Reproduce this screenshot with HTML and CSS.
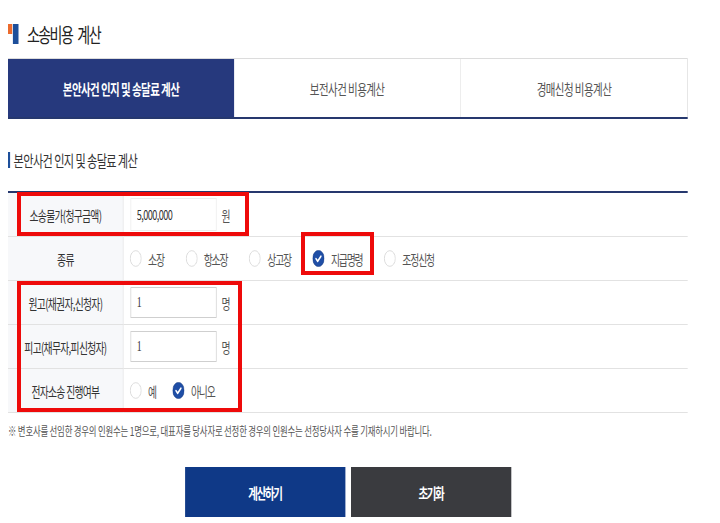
FILE: index.html
```html
<!DOCTYPE html>
<html>
<head>
    <meta charset="utf-8">
    <title>소송비용 계산</title>
    <link rel="stylesheet" href="styles.css">
</head>
<body>
<div class="stage">
    <div class="page">
        <h2 class="title">
            <span class="title-mark"><i class="mark-orange"></i><i class="mark-blue"></i></span>
            소송비용 계산
        </h2>

        <ul class="tabs">
            <li class="tab active">본안사건 인지 및 송달료 계산</li>
            <li class="tab">보전사건 비용계산</li>
            <li class="tab">경매신청 비용계산</li>
        </ul>

        <h3 class="section-title">본안사건 인지 및 송달료 계산</h3>

        <table class="calc">
            <tr>
                <th>소송물가(청구금액)</th>
                <td>
                    <input type="text" class="field field-amount" value="5,000,000"><span class="unit">원</span>
                </td>
            </tr>
            <tr>
                <th>종류</th>
                <td>
                    <div class="radios">
                        <label class="radio"><svg viewBox="0 0 18 18"><circle cx="9" cy="9" r="8.3" fill="#fff" stroke="#d4d4d4"/></svg>소장</label>
                        <label class="radio"><svg viewBox="0 0 18 18"><circle cx="9" cy="9" r="8.3" fill="#fff" stroke="#d4d4d4"/></svg>항소장</label>
                        <label class="radio"><svg viewBox="0 0 18 18"><circle cx="9" cy="9" r="8.3" fill="#fff" stroke="#d4d4d4"/></svg>상고장</label>
                        <label class="radio"><svg viewBox="0 0 18 18"><circle cx="9" cy="9" r="8.6" fill="#1f4ea6" stroke="#173d85" stroke-width="0.8"/><path d="M5.2 9.2l2.6 2.7 5-5.3" fill="none" stroke="#fff" stroke-width="2" stroke-linecap="round" stroke-linejoin="round"/></svg>지급명령</label>
                        <label class="radio"><svg viewBox="0 0 18 18"><circle cx="9" cy="9" r="8.3" fill="#fff" stroke="#d4d4d4"/></svg>조정신청</label>
                    </div>
                </td>
            </tr>
            <tr>
                <th>원고(채권자,신청자)</th>
                <td>
                    <input type="text" class="field field-count" value="1"><span class="unit">명</span>
                </td>
            </tr>
            <tr>
                <th>피고(채무자,피신청자)</th>
                <td>
                    <input type="text" class="field field-count" value="1"><span class="unit">명</span>
                </td>
            </tr>
            <tr>
                <th>전자소송 진행여부</th>
                <td>
                    <div class="radios radios-tight">
                        <label class="radio"><svg viewBox="0 0 18 18"><circle cx="9" cy="9" r="8.3" fill="#fff" stroke="#d4d4d4"/></svg>예</label>
                        <label class="radio"><svg viewBox="0 0 18 18"><circle cx="9" cy="9" r="8.6" fill="#1f4ea6" stroke="#173d85" stroke-width="0.8"/><path d="M5.2 9.2l2.6 2.7 5-5.3" fill="none" stroke="#fff" stroke-width="2" stroke-linecap="round" stroke-linejoin="round"/></svg>아니오</label>
                    </div>
                </td>
            </tr>
        </table>

        <p class="note">※ 변호사를 선임한 경우의 인원수는 1명으로, 대표자를 당사자로 선정한 경우의 인원수는 선정당사자 수를 기재하시기 바랍니다.</p>

        <div class="buttons">
            <button type="button" class="btn btn-calc">계산하기</button>
            <button type="button" class="btn btn-reset">초기화</button>
        </div>
    </div>

    <!-- red annotation boxes -->
    <div class="mark mark-amount"></div>
    <div class="mark mark-type"></div>
    <div class="mark mark-people"></div>
</div>
</body>
</html>
```

FILE: styles.css
```css
body {
    margin: 0;
    background: #fff;
    font-family: "Noto Sans CJK KR", "Noto Sans", sans-serif;
    color: #333;
}
.stage {
    position: relative;
    width: 720px;
    height: 523px;
    overflow: hidden;
}
/* the page is drawn wide and squeezed horizontally */
.page {
    width: 971px;
    margin-left: 8px;
    transform: scaleX(0.7);
    transform-origin: 0 0;
}
.title {
    display: flex;
    align-items: center;
    height: 24px;
    margin: 22px 0 0;
    font-size: 20px;
    font-weight: normal;
    letter-spacing: -2.2px;
    word-spacing: 5px;
    color: #222;
}
.title-mark {
    display: flex;
    align-items: flex-start;
    height: 20px;
    margin-right: 12px;
}
.mark-orange {
    width: 6px;
    height: 10px;
    background: #ec6b2d;
    margin-right: 1px;
}
.mark-blue {
    width: 8px;
    height: 20px;
    background: #1d4f9a;
}
.tabs {
    display: flex;
    list-style: none;
    margin: 12px 0 0;
    padding: 0;
    border-top: 1px solid #dcdcdc;
    border-bottom: 2px solid #26386e;
}
.tab {
    flex: 1;
    height: 58px;
    display: flex;
    align-items: center;
    justify-content: center;
    font-size: 15px;
    letter-spacing: -0.8px;
    color: #555;
    border-right: 1px solid #e6e6e6;
}
.tab:last-child {
    border-right: 1px solid #dcdcdc;
}
.tab.active {
    background: #26397d;
    color: #fff;
    font-weight: bold;
    border-right: none;
}
.section-title {
    margin: 33px 0 0;
    height: 16px;
    line-height: 16px;
    padding-left: 5px;
    border-left: 3px solid #1d4f9a;
    font-size: 16px;
    font-weight: normal;
    letter-spacing: -0.9px;
    color: #333;
}
.calc {
    width: 100%;
    margin-top: 23px;
    border-collapse: collapse;
    border-top: 2px solid #26386e;
}
.calc th,
.calc td {
    height: 43px;
    padding: 0;
    border-bottom: 1px solid #e2e2e2;
    font-size: 14px;
    letter-spacing: -1px;
}
.calc th {
    width: 164px;
    background: #f7f8fa;
    border-right: 1px solid #e6e6e6;
    font-weight: normal;
    color: #333;
    text-align: center;
}
.calc td {
    padding-left: 9px;
}
.field {
    width: 123px;
    height: 31px;
    box-sizing: border-box;
    margin-left: 1px;
    padding: 0 8px;
    border: 1px solid #cfcfcf;
    vertical-align: middle;
    color: #333;
}
.field-amount {
    height: 33px;
    border-color: #ececec;
    font-family: "Noto Sans CJK KR", sans-serif;
    font-size: 13px;
    letter-spacing: -0.8px;
}
.field-count {
    font-family: "Liberation Serif", serif;
    font-size: 14px;
    letter-spacing: 0;
}
.unit {
    margin-left: 7px;
    vertical-align: middle;
    color: #555;
}
.radios {
    display: flex;
    align-items: center;
    gap: 31px;
    letter-spacing: -1.6px;
}
.radios-tight {
    gap: 24px;
}
.radio {
    display: flex;
    align-items: center;
    gap: 9px;
    color: #555;
}
.radio svg {
    width: 17px;
    height: 17px;
}
.note {
    margin: 10px 0 0;
    line-height: 16px;
    font-size: 12px;
    letter-spacing: -0.3px;
    color: #555;
}
.buttons {
    display: flex;
    justify-content: center;
    gap: 8px;
    margin-top: 28px;
}
.btn {
    width: 229px;
    height: 50px;
    border: none;
    color: #fff;
    font-family: "Noto Sans CJK KR", sans-serif;
    font-size: 15px;
    font-weight: bold;
    letter-spacing: -2px;
    cursor: pointer;
}
.btn-calc {
    background: #0f3987;
}
.btn-reset {
    background: #3a3b3f;
}
.mark {
    position: absolute;
    box-sizing: border-box;
    border: 4px solid #ee0a0a;
}
.mark-amount {
    left: 17px;
    top: 192px;
    width: 232px;
    height: 44px;
}
.mark-type {
    left: 301px;
    top: 232px;
    width: 73px;
    height: 43px;
}
.mark-people {
    left: 17px;
    top: 281px;
    width: 225px;
    height: 131px;
}
```
